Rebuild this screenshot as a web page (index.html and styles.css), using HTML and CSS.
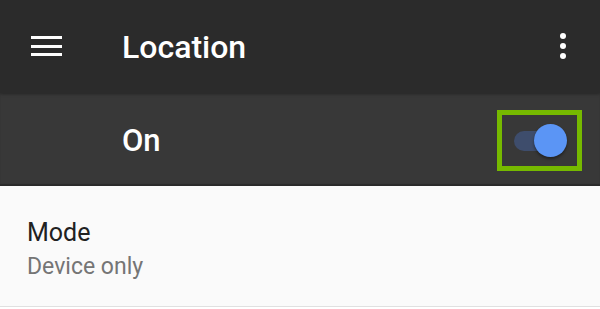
FILE: index.html
```html
<html>
<head>
<meta charset="UTF-8">
<meta name="viewport" content="width=device-width, initial-scale=1.0">
<link rel="stylesheet" href="styles.css">
</head>
<body>
<div class="settings">
    <div class="appbar">
        <div class="menu-btn">
            <span></span><span></span><span></span>
        </div>
        <div class="title">Location</div>
        <div class="more-btn">
            <span></span><span></span><span></span>
        </div>
    </div>
    <div class="master">
        <div class="master-label">On</div>
        <div class="highlight">
            <div class="switch">
                <div class="track"></div>
                <div class="thumb"></div>
            </div>
        </div>
    </div>
    <div class="pref">
        <div class="pref-title">Mode</div>
        <div class="pref-summary">Device only</div>
    </div>
</div>
</body>
</html>
```

FILE: styles.css
```css
*{ margin: 0; padding: 0; box-sizing: border-box; }
body { font-family: Roboto, "Noto Sans", sans-serif; background: #ffffff; width: 600px; height: 309px; overflow: hidden; }

.appbar { height: 93px; background: #2b2b2b; display: flex; align-items: center; position: relative; z-index: 2; box-shadow: 0 1px 3px rgba(0,0,0,0.35); }
.appbar .menu-btn { width: 31px; margin-left: 31px; display: flex; flex-direction: column; gap: 5.5px; margin-top: -1px; }
.appbar .menu-btn span { display: block; height: 3px; background: #ffffff; }
.appbar .title { margin-left: 60px; font-size: 32px; font-weight: 500; color: #ffffff; flex: 1; margin-top: 1px; }
.appbar .more-btn { width: 6px; margin-right: 34px; display: flex; flex-direction: column; gap: 4px; margin-top: -1px; }
.appbar .more-btn span { display: block; width: 6px; height: 6px; border-radius: 50%; background: #ffffff; }

.master { height: 93px; background: #383838; display: flex; align-items: center; padding-left: 122px; padding-right: 18px; box-shadow: inset 0 -2px 1px rgba(0,0,0,0.25); }
.master .master-label { flex: 1; font-size: 31px; font-weight: 500; color: #ffffff; margin-top: 2px; }
.master .highlight { width: 85px; height: 61px; border: 5px solid #76b900; display: flex; align-items: center; padding-left: 12px; margin-top: 1px; }

.switch { position: relative; width: 53px; height: 33px; }
.switch .track { position: absolute; left: 0; top: 7px; width: 48px; height: 20px; border-radius: 10px; background: #3e4d6c; }
.switch .thumb { position: absolute; left: 20px; top: 0; width: 33px; height: 33px; border-radius: 50%; background: #5b95f5; box-shadow: 0 2px 3px rgba(0,0,0,0.4); }

.pref { height: 121px; background: #fafafa; border-bottom: 1px solid #e0e0e0; padding-left: 27px; padding-top: 31px; }
.pref .pref-title { font-size: 25px; color: #212121; line-height: 32px; }
.pref .pref-summary { font-size: 23px; color: #757575; line-height: 30px; margin-top: 3px; }
```
